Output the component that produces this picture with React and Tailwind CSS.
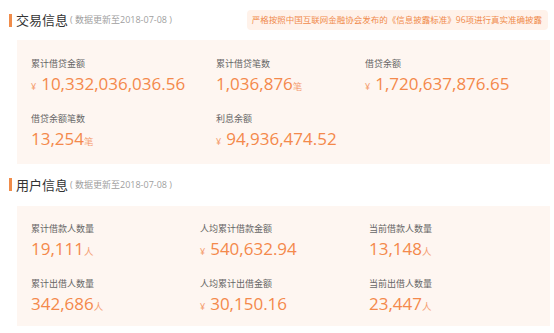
import React from 'react';

const trade = [
    [
        { label: '累计借贷金额', value: '10,332,036,036.56', yuan: true },
        { label: '累计借贷笔数', value: '1,036,876', unit: '笔' },
        { label: '借贷余额', value: '1,720,637,876.65', yuan: true },
    ],
    [
        { label: '借贷余额笔数', value: '13,254', unit: '笔' },
        { label: '利息余额', value: '94,936,474.52', yuan: true },
    ],
];

const users = [
    [
        { label: '累计借款人数量', value: '19,111', unit: '人' },
        { label: '人均累计借款金额', value: '540,632.94', yuan: true },
        { label: '当前借款人数量', value: '13,148', unit: '人' },
    ],
    [
        { label: '累计出借人数量', value: '342,686', unit: '人' },
        { label: '人均累计出借金额', value: '30,150.16', yuan: true },
        { label: '当前出借人数量', value: '23,447', unit: '人' },
    ],
];

const Stat = ({ label, value, unit, yuan }) => (
    <div>
        <div className="h-[12px] text-[9px] leading-[12px] text-[#666]">{label}</div>
        <div className="mt-[4px] flex items-baseline text-[#f4894b]">
            {yuan && <span className="mr-[5px] text-[9px] text-[#f5a073]">¥</span>}
            <span className="text-[17px] leading-[20px]">{value}</span>
            {unit && <span className="text-[9.5px] text-[#f5a073]">{unit}</span>}
        </div>
    </div>
);

const SectionTitle = ({ title }) => (
    <div className="flex items-center">
        <span className="h-[13px] w-[3px] bg-[#f08c4a]" />
        <span className="ml-[4px] text-[13px] leading-[20px] text-[#333]">{title}</span>
        <span className="ml-[2px] text-[9px] text-[#a0a0a0]">( 数据更新至2018-07-08 )</span>
    </div>
);

export default function App() {
    return (
        <div
            className="h-[333px] w-[554px] bg-white pl-[9px] pr-[4px] pt-[10px]"
            style={{ fontFamily: '"Open Sans", "Noto Sans CJK SC", sans-serif' }}
        >
            <div className="flex h-[20px] items-center justify-between">
                <SectionTitle title="交易信息" />
                <div className="mr-[2px] flex h-[20px] items-center rounded-[4px] bg-[#fff2ea] pl-[5px] pr-[6px] text-[8.5px] text-[#f08a4b]">
                    严格按照中国互联网金融协会发布的《信息披露标准》96项进行真实准确披露
                </div>
            </div>

            <div className="ml-[8px] mt-[10px] bg-[#fef6f1] pb-[14px] pl-[14px] pt-[18px]">
                <div className="flex flex-col gap-[19px]">
                    {trade.map((row, i) => (
                        <div key={i} className="grid grid-cols-[185px_149px_1fr]">
                            {row.map((s) => (
                                <Stat key={s.label} {...s} />
                            ))}
                        </div>
                    ))}
                </div>
            </div>

            <div className="mt-[11px]">
                <SectionTitle title="用户信息" />
            </div>

            <div className="ml-[8px] mt-[11px] bg-[#fef6f1] pb-[12px] pl-[14px] pt-[17px]">
                <div className="flex flex-col gap-[19px]">
                    {users.map((row, i) => (
                        <div key={i} className="grid grid-cols-[169px_169px_1fr]">
                            {row.map((s) => (
                                <Stat key={s.label} {...s} />
                            ))}
                        </div>
                    ))}
                </div>
            </div>
        </div>
    );
}
